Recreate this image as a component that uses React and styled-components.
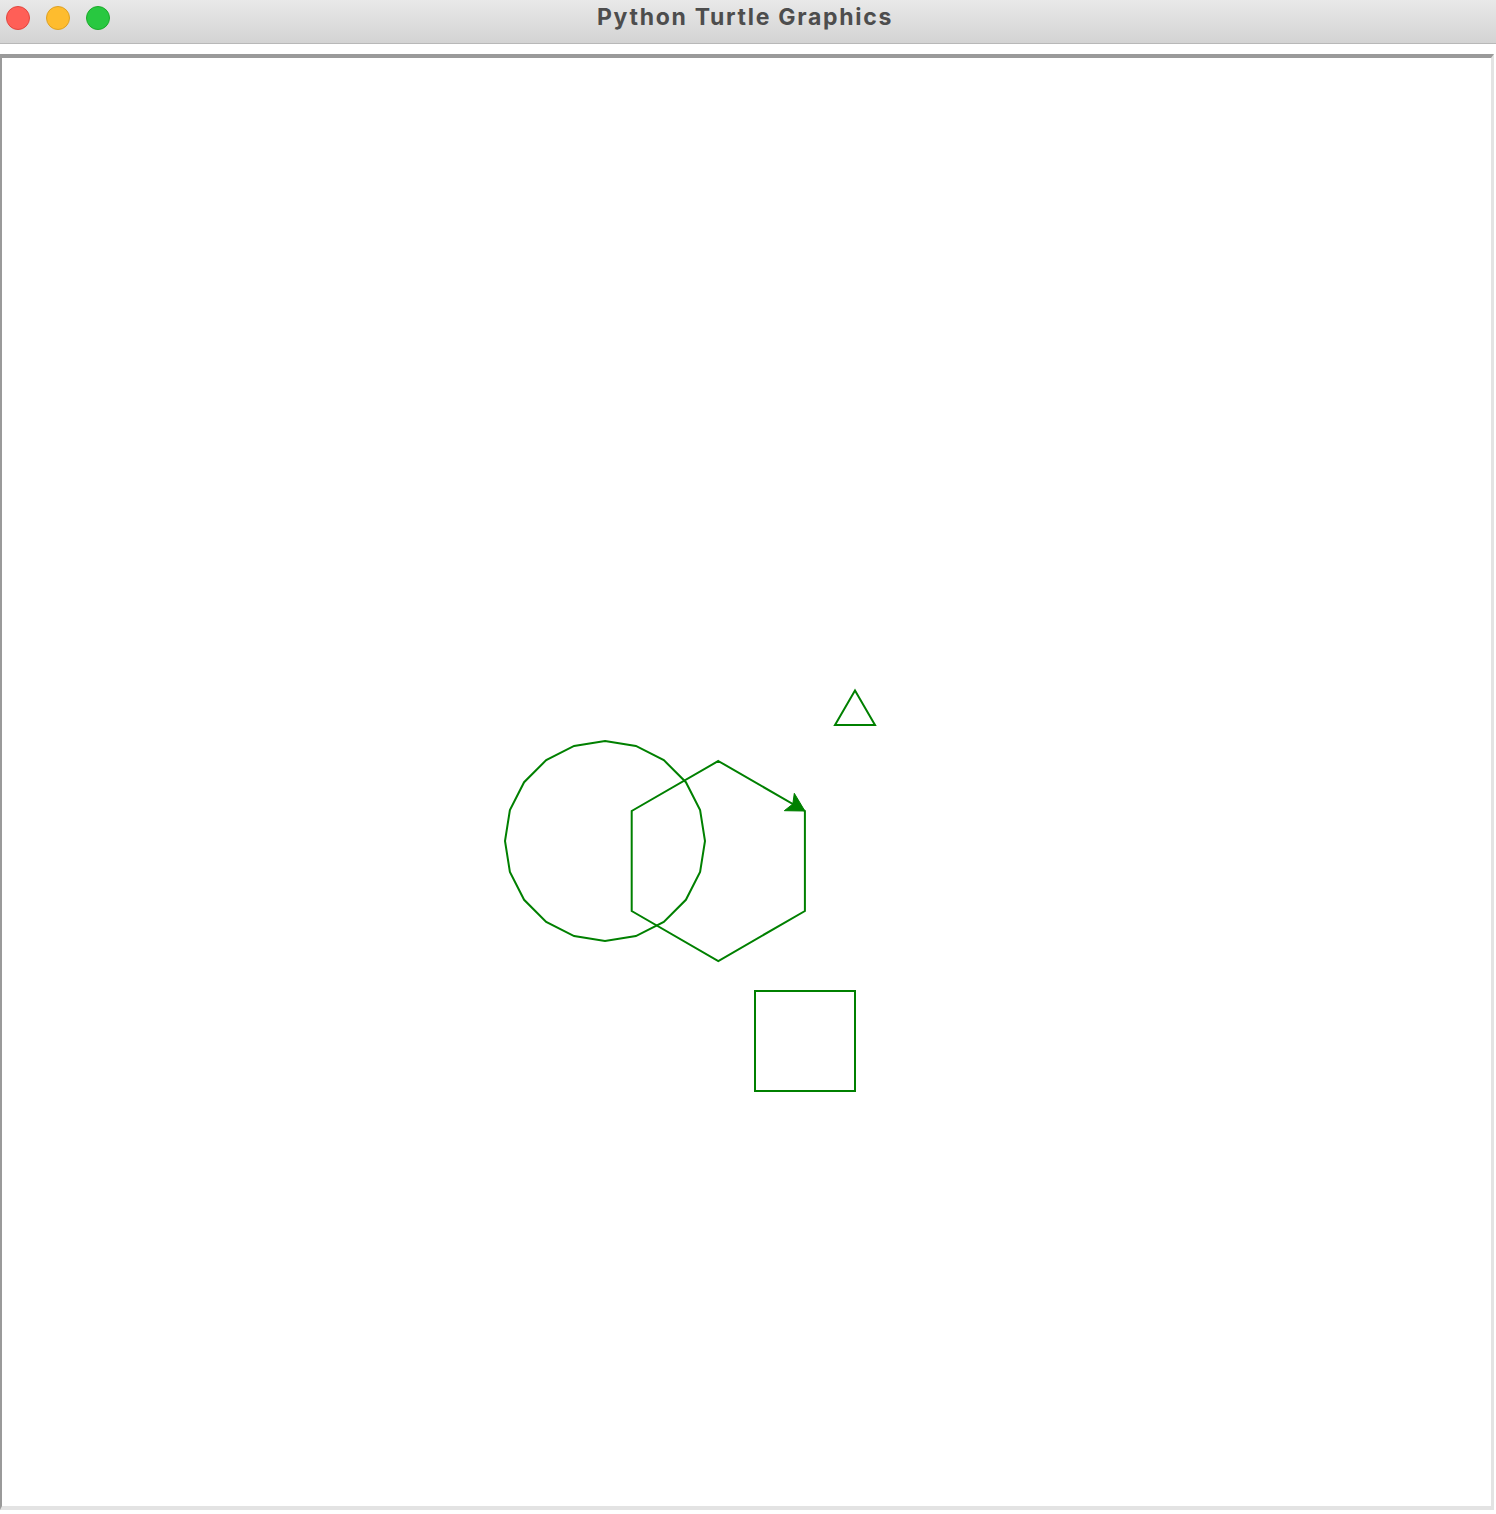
import React from 'react';
import styled, { createGlobalStyle } from 'styled-components';

const GlobalStyle = createGlobalStyle`
  html, body {
    margin:0;
    padding:0;
    background:#ffffff;
    overflow:hidden;
  }
`

const Window = styled.div`
  width:1496px;
  height:1514px;
  display:flex;
  flex-direction:column;
  background:#ffffff;
  font-family:Inter, "Liberation Sans", sans-serif;
`

const TitleBar = styled.div`
  height:43px;
  flex:none;
  display:grid;
  grid-template-columns:1fr auto 1fr;
  padding-right:6px;
  background:linear-gradient(to bottom, #e9e9e9, #d3d3d3);
  border-bottom:1px solid #b8b8b8;
`

const Lights = styled.div`
  display:flex;
  gap:16px;
  padding:6px 0 0 6px;
  align-self:start;
`

const Light = styled.span`
  width:22px;
  height:22px;
  border-radius:50%;
  background:${props => props.fill};
  border:1px solid ${props => props.edge};
`

const Title = styled.div`
  align-self:start;
  font-size:23px;
  line-height:34px;
  font-weight:700;
  letter-spacing:1.7px;
  color:#4d4d4d;
`

const CanvasFrame = styled.div`
  margin:10px 2px 4px 0;
  flex:1;
  display:flex;
  border-top:4px solid #9a9a9a;
  border-left:2px solid #9a9a9a;
  border-right:3px solid #e3e3e3;
  border-bottom:4px solid #e3e3e3;
  background:#ffffff;
  overflow:hidden;
`

const Screen = styled.svg`
  display:block;
  flex:none;
`

const INK = '#008000'

// 20-gon turtle circle, vertex at top
const circlePoints = Array.from({ length: 20 }, (_, k) => {
  const a = (k * 18 * Math.PI) / 180
  return `${(605 + 100 * Math.sin(a)).toFixed(1)},${(841 - 100 * Math.cos(a)).toFixed(1)}`
}).join(' ')

const hexPoints = [0, 1, 2, 3, 4, 5].map(k => {
  const a = (k * 60 * Math.PI) / 180
  return `${(718.3 + 100 * Math.sin(a)).toFixed(1)},${(861 - 100 * Math.cos(a)).toFixed(1)}`
}).join(' ')

// classic turtle arrow, tip at the turtle, heading down-right 30deg
const turtle = (() => {
  const tx = 804.9, ty = 811
  const hx = Math.cos(Math.PI / 6), hy = Math.sin(Math.PI / 6)
  const px = -hy, py = hx
  const pts = [
    [0, 0],
    [-18, 10],
    [-14, 0],
    [-18, -10],
  ].map(([b, s]) => `${(tx + b * hx + s * px).toFixed(1)},${(ty + b * hy + s * py).toFixed(1)}`)
  return pts.join(' ')
})()

const App = () => {
  return (
    <Window>
      <GlobalStyle />
      <TitleBar>
        <Lights>
          <Light fill='#ff5f57' edge='#e2463f' />
          <Light fill='#febc2e' edge='#dea123' />
          <Light fill='#28c840' edge='#1aab29' />
        </Lights>
        <Title>Python Turtle Graphics</Title>
        <span />
      </TitleBar>
      <CanvasFrame>
        <Screen width='1489' height='1448' viewBox='2 58 1489 1448'>
          <g fill='none' stroke={INK} strokeWidth='2' strokeLinejoin='miter'>
            <polygon points={circlePoints} />
            <polygon points={hexPoints} />
            <polygon points='855,690.4 875,725 835,725' />
            <rect x='755' y='991' width='100' height='100' />
          </g>
          <polygon points={turtle} fill={INK} stroke={INK} strokeWidth='1' />
        </Screen>
      </CanvasFrame>
    </Window>
  )
}

export default App;
